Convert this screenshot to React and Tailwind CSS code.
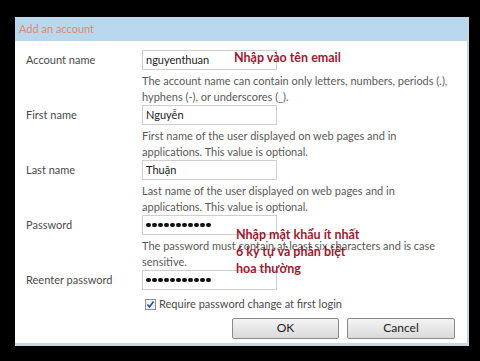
import React from 'react';

const font = { fontFamily: 'Lato, "Open Sans", sans-serif' };

const Dots = () => (
  <div className="flex items-center gap-[1.5px]">
    {Array.from({ length: 11 }).map((_, i) => (
      <span key={i} className="w-[4.5px] h-[4.5px] rounded-full bg-[#111]" />
    ))}
  </div>
);

const Field = ({ label, children, help }) => (
  <div className="flex">
    <div className="w-[116px] h-[20px] flex items-center text-[11px] text-[#4a4a4a]">{label}</div>
    <div className="flex-1">
      <div className="w-[135px] h-[20px] border border-[#cfcfcf] bg-white flex items-center px-[3px] text-[11px] text-[#222]">
        {children}
      </div>
      {help && (
        <div className="mt-[3px] h-[32px] whitespace-nowrap text-[11px] leading-[15.5px] text-[#5a5a5a]">{help}</div>
      )}
    </div>
  </div>
);

const App = () => {
  return (
    <div className="w-[480px] h-[361px] bg-black pt-[17px] pl-[15px]" style={font}>
      <div className="relative w-[454px] h-[329px] bg-white border-r-2 border-b-[3px] border-[#c9d6df] flex flex-col">
        {/* Title bar */}
        <div className="h-[24px] bg-[#b9d8ee] flex items-center pl-[4px] text-[11px] text-[#e2876c]">
          Add an account
        </div>

        {/* Form */}
        <div className="pt-[9px] pl-[11px]">
          <Field label="Account name" help={<>The account name can contain only letters, numbers, periods (.),<br />hyphens (-), or underscores (_).</>}>
            nguyenthuan
          </Field>
          <Field label="First name" help={<>First name of the user displayed on web pages and in<br />applications. This value is optional.</>}>
            Nguyễn
          </Field>
          <Field label="Last name" help={<>Last name of the user displayed on web pages and in<br />applications. This value is optional.</>}>
            Thuận
          </Field>
          <Field label="Password" help={<>The password must contain at least six characters and is case<br />sensitive.</>}>
            <Dots />
          </Field>
          <Field label="Reenter password">
            <Dots />
          </Field>

          <div className="ml-[119px] mt-[6px] flex items-center gap-[3px] text-[11px] text-[#4a4a4a]">
            <span className="w-[11px] h-[11px] border border-[#8f8f8f] bg-[#eef3f8] flex items-center justify-center">
              <svg width="9" height="9" viewBox="0 0 9 9">
                <path d="M1.5 4.5 L3.5 7 L7.5 1.5" fill="none" stroke="#2c4f8f" strokeWidth="1.6" />
              </svg>
            </span>
            Require password change at first login
          </div>

          <div className="mt-[5px] ml-[206px] flex gap-[8px]">
            <button className="w-[107px] h-[21px] rounded-[2px] border border-[#8a8a8a] bg-gradient-to-b from-[#f4f4f4] to-[#dadada] text-[12px] text-[#222]">
              OK
            </button>
            <button className="w-[108px] h-[21px] rounded-[2px] border border-[#8a8a8a] bg-gradient-to-b from-[#f4f4f4] to-[#dadada] text-[12px] text-[#222]">
              Cancel
            </button>
          </div>
        </div>

        {/* Red annotations */}
        <div className="absolute left-[219px] top-[32px] text-[12.5px] font-bold text-[#9c1a30]">
          Nhập vào tên email
        </div>
        <div className="absolute left-[221px] top-[209px] text-[12.5px] leading-[17px] font-bold text-[#9c1a30]">
          Nhập mật khẩu ít nhất<br />6 ký tự và phân biệt<br />hoa thường
        </div>
      </div>
    </div>
  );
};

export default App;
